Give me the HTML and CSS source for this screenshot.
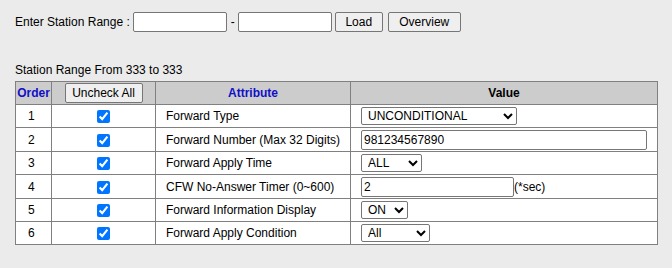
FILE: index.html
```html
<!DOCTYPE html>
<html lang="en">
<head>
    <meta charset="UTF-8">
    <meta name="viewport" content="width=device-width, initial-scale=1.0">
    <title>Call Forward Settings</title>
    <link rel="stylesheet" href="styles.css">
</head>
<body>
    <div class="range-bar">
        <span class="range-label">Enter Station Range :</span>
        <input type="text" class="range-input" id="range-from">
        <span class="range-dash">-</span>
        <input type="text" class="range-input" id="range-to">
        <button class="btn btn-load">Load</button>
        <button class="btn btn-overview">Overview</button>
    </div>

    <div class="range-caption">Station Range From 333 to 333</div>

    <table class="attr-table">
        <colgroup>
            <col class="col-order">
            <col class="col-check">
            <col class="col-attr">
            <col class="col-value">
        </colgroup>
        <thead>
            <tr>
                <th class="head-blue">Order</th>
                <th><button class="btn btn-uncheck">Uncheck All</button></th>
                <th class="head-blue">Attribute</th>
                <th>Value</th>
            </tr>
        </thead>
        <tbody>
            <tr>
                <td class="order">1</td>
                <td class="check"><input type="checkbox" checked></td>
                <td class="attr">Forward Type</td>
                <td class="value">
                    <select class="sel sel-type">
                        <option>UNCONDITIONAL</option>
                        <option>BUSY</option>
                        <option>NO ANSWER</option>
                    </select>
                </td>
            </tr>
            <tr class="tall">
                <td class="order">2</td>
                <td class="check"><input type="checkbox" checked></td>
                <td class="attr">Forward Number (Max 32 Digits)</td>
                <td class="value"><input type="text" class="txt txt-number" value="981234567890"></td>
            </tr>
            <tr>
                <td class="order">3</td>
                <td class="check"><input type="checkbox" checked></td>
                <td class="attr">Forward Apply Time</td>
                <td class="value">
                    <select class="sel sel-time">
                        <option>ALL</option>
                        <option>DAY</option>
                        <option>NIGHT</option>
                    </select>
                </td>
            </tr>
            <tr class="tall">
                <td class="order">4</td>
                <td class="check"><input type="checkbox" checked></td>
                <td class="attr">CFW No-Answer Timer (0~600)</td>
                <td class="value"><input type="text" class="txt txt-timer" value="2"><span class="unit">(*sec)</span></td>
            </tr>
            <tr>
                <td class="order">5</td>
                <td class="check"><input type="checkbox" checked></td>
                <td class="attr">Forward Information Display</td>
                <td class="value">
                    <select class="sel sel-onoff">
                        <option>ON</option>
                        <option>OFF</option>
                    </select>
                </td>
            </tr>
            <tr>
                <td class="order">6</td>
                <td class="check"><input type="checkbox" checked></td>
                <td class="attr">Forward Apply Condition</td>
                <td class="value">
                    <select class="sel sel-cond">
                        <option>All</option>
                        <option>Internal</option>
                        <option>External</option>
                    </select>
                </td>
            </tr>
        </tbody>
    </table>
</body>
</html>
```

FILE: styles.css
```css
body {
    font-family: 'Liberation Sans', Arial, sans-serif;
    font-size: 12px;
    background-color: #ebebeb;
    color: #000;
    margin: 0;
    padding: 12px 15px;
}

.range-bar {
    display: flex;
    align-items: center;
    height: 20px;
}

.range-label {
    margin-right: 3px;
}

.range-input {
    box-sizing: border-box;
    width: 94px;
    height: 20px;
    margin: 0;
    border: 1px solid #767676;
    border-radius: 2px;
    background: #fff;
    font: inherit;
}

.range-dash {
    margin: 0 3px 0 4px;
}

.btn {
    box-sizing: border-box;
    height: 20px;
    margin: 0;
    padding: 0 6px;
    border: 1px solid #767676;
    border-radius: 2px;
    background: #efefef;
    font-family: 'Liberation Sans', Arial, sans-serif;
    font-size: 12px;
    color: #000;
}

.btn-load {
    width: 48px;
    margin-left: 3px;
}

.btn-overview {
    width: 73px;
    margin-left: 5px;
}

.range-caption {
    margin-top: 31px;
    height: 14px;
    line-height: 14px;
}

.attr-table {
    margin-top: 4px;
    border-collapse: collapse;
    table-layout: fixed;
    width: 643px;
    background: #fff;
}

.col-order { width: 36px; }
.col-check { width: 104px; }
.col-attr { width: 195px; }
.col-value { width: 307px; }

.attr-table th,
.attr-table td {
    border: 1px solid #808080;
    padding: 0;
    height: 22px;
    vertical-align: middle;
    white-space: nowrap;
}

.attr-table .tall td {
    height: 23px;
}

.attr-table th {
    background: #cccccc;
    font-weight: bold;
    text-align: center;
}

.head-blue {
    color: #1010c8;
}

.btn-uncheck {
    width: 78px;
    height: 20px;
    display: block;
    margin: 0 auto;
}

.order {
    padding-left: 12px !important;
}

.check {
    text-align: center;
}

.check input {
    margin: 0;
    width: 13px;
    height: 13px;
    vertical-align: middle;
}

.attr,
.value {
    padding-left: 10px !important;
}

.sel {
    box-sizing: border-box;
    height: 18px;
    margin: 0;
    padding: 0 0 0 2px;
    border: 1px solid #767676;
    border-radius: 2px;
    background: #fff;
    font-family: 'Liberation Sans', Arial, sans-serif;
    font-size: 12px;
    color: #000;
    vertical-align: middle;
}

.sel-type { width: 156px; }
.sel-time { width: 61px; }
.sel-onoff { width: 47px; }
.sel-cond { width: 69px; }

.txt {
    box-sizing: border-box;
    height: 20px;
    margin: 0;
    padding: 0 2px;
    border: 1px solid #767676;
    border-radius: 2px;
    background: #fff;
    font-family: 'Liberation Sans', Arial, sans-serif;
    font-size: 12px;
    color: #000;
    vertical-align: middle;
}

.txt-number { width: 286px; }
.txt-timer { width: 153px; }

.unit {
    vertical-align: middle;
}
```
